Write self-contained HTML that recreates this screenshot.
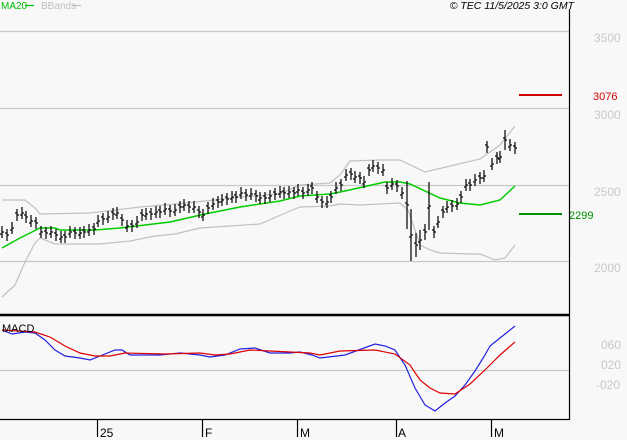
<!DOCTYPE html>
<html><head><meta charset="utf-8"><style>
html,body{margin:0;padding:0;background:#f8f8f8;}
body{width:627px;height:440px;overflow:hidden;position:relative;font-family:"Liberation Sans",sans-serif;}
svg{position:absolute;left:0;top:0;}
</style></head><body>
<svg width="627" height="440" viewBox="0 0 627 440" xmlns="http://www.w3.org/2000/svg" font-family="Liberation Sans, sans-serif">
<rect width="627" height="440" fill="#f8f8f8"/>
<g stroke="#c8c8c8" stroke-width="1.2">
<line x1="0" y1="31.5" x2="569" y2="31.5"/>
<line x1="0" y1="108.5" x2="569" y2="108.5"/>
<line x1="0" y1="185.5" x2="569" y2="185.5"/>
<line x1="0" y1="261.5" x2="569" y2="261.5"/>
<line x1="0" y1="370.5" x2="569" y2="370.5"/>
</g>
<g fill="#c8c8c8" font-size="12">
<text x="594" y="42">3500</text>
<text x="594" y="119">3000</text>
<text x="594" y="196">2500</text>
<text x="594" y="272">2000</text>
<text x="601" y="349">060</text>
<text x="601" y="369">020</text>
<text x="596" y="389">-020</text>
</g>
<polyline fill="none" stroke="#c0c0c0" stroke-width="1.2" points="2,200 25,200 35,208 40,214 90,213 140,207 175,204 215,200 240,197 280,194 300,185 330,183 340,175 350,161 380,160 400,160 425,172 480,159 500,145 515,126"/>
<polyline fill="none" stroke="#c0c0c0" stroke-width="1.2" points="2,297 15,285 25,262 35,243 40,238 55,244 100,244 130,241 155,236 175,234 200,228 230,226 260,224 290,211 300,207 330,206 340,204 360,205 400,203 408,210 415,230 420,245 430,250 440,253 470,254 480,254 495,260 505,258 515,245"/>
<polyline fill="none" stroke="#00cc00" stroke-width="1.5" points="2,248 20,238 40,228 55,228 60,230 95,230 120,228 170,222 205,214 240,207 280,201 300,196 330,194 345,191 385,182 400,182 410,184 440,198 460,203 480,205 500,200 515,186"/>
<g id="bars" stroke="#000" stroke-width="1.2"></g>
<line x1="519" y1="95" x2="562" y2="95" stroke="#d00000" stroke-width="2"/>
<text x="593" y="100" font-size="11" fill="#d00000">3076</text>
<line x1="519" y1="214" x2="562" y2="214" stroke="#009000" stroke-width="2"/>
<text x="569" y="219" font-size="11" fill="#009000">2299</text>
<polyline fill="none" stroke="#2020e0" stroke-width="1.2" points="2,330 12,334 25,332 35,333 45,340 55,350 65,356 80,358 90,360 100,356 115,350 122,350 130,355 160,355 180,353 200,355 210,357 225,355 240,349 255,348 270,353 290,353 300,352 312,355 320,358 345,355 375,344 385,346 395,350 405,365 415,388 425,405 435,411 445,403 455,396 465,385 475,371 485,355 490,346 500,338 515,326"/>
<polyline fill="none" stroke="#dd0000" stroke-width="1.2" points="2,330 35,332 50,337 65,346 80,353 95,356 110,356 125,353 165,354 200,353 215,355 230,354 250,350 270,351 310,353 320,355 340,351 375,350 395,354 410,365 420,380 430,388 440,393 455,394 470,384 485,370 500,355 515,342"/>
<text x="2" y="332" font-size="11" fill="#000">MACD</text>
<line x1="0" y1="315" x2="569" y2="315" stroke="#000" stroke-width="2.5"/>
<line x1="569.5" y1="9" x2="569.5" y2="420" stroke="#000" stroke-width="1.2"/>
<line x1="0" y1="419.5" x2="569" y2="419.5" stroke="#000" stroke-width="1.2"/>
<g stroke="#000" stroke-width="1.2">
<line x1="97.5" y1="419" x2="97.5" y2="437"/>
<line x1="202.5" y1="419" x2="202.5" y2="437"/>
<line x1="297.5" y1="419" x2="297.5" y2="437"/>
<line x1="396.5" y1="419" x2="396.5" y2="437"/>
<line x1="491.5" y1="419" x2="491.5" y2="437"/>
</g>
<g font-size="12" fill="#000">
<text x="100" y="437">25</text>
<text x="205" y="437">F</text>
<text x="300" y="437">M</text>
<text x="398" y="437">A</text>
<text x="494" y="437">M</text>
</g>
<text x="1" y="9" font-size="10" fill="#00bb00">MA20</text>
<line x1="25" y1="5.5" x2="34" y2="5.5" stroke="#00bb00" stroke-width="1.2"/>
<text x="41" y="9" font-size="10" fill="#c0c0c0">BBands</text>
<line x1="72" y1="5.5" x2="81" y2="5.5" stroke="#c0c0c0" stroke-width="1.2"/>
<text x="574" y="9" font-size="10.5" font-style="italic" fill="#000" text-anchor="end">© TEC 11/5/2025 3:0 GMT</text>
</svg>
<script>
var d=[[2,232],[7,235],[12,228],[17,215],[22,213],[26,217],[31,221],[36,223],[41,232],[46,233],[51,232],[56,235],[61,237],[65,237],[70,232],[75,233],[80,233],[84,232],[89,230],[94,229],[98,221],[103,219],[108,217],[113,214],[117,213],[122,220],[127,226],[132,226],[137,222],[142,215],[146,214],[151,214],[156,212],[160,212],[165,209],[170,211],[175,210],[180,207],[184,205],[189,207],[194,207],[199,212],[203,215],[208,208],[213,204],[218,202],[222,200],[227,199],[232,197],[236,197],[241,193],[246,195],[251,194],[256,196],[260,198],[265,198],[270,196],[275,194],[280,192],[284,193],[289,192],[294,193],[298,190],[303,193],[308,190],[312,188],[317,197],[322,202],[327,202],[331,197],[336,188],[341,185],[346,175],[351,174],[355,177],[360,178],[364,182],[369,170],[373,166],[378,168],[383,170],[387,188],[392,184],[397,186],[402,193],[407,205,24],[411,235,26],[416,245,12],[420,240,10],[425,232,8],[429,206,24],[434,232,6],[438,222],[443,212],[447,207],[452,206],[457,204],[461,197],[466,185],[470,185],[475,180],[480,178],[484,176],[487,147],[492,164],[497,158],[500,157],[505,140,10],[510,145],[515,148]];
var g=document.getElementById('bars'),s='';
d.forEach(function(b,i){var h=b[2]||6;var o=(i%2)?-2:2;
s+='<line x1="'+b[0]+'" y1="'+(b[1]-h)+'" x2="'+b[0]+'" y2="'+(b[1]+h)+'"/>';
s+='<line x1="'+(b[0]-2)+'" y1="'+(b[1]+o)+'" x2="'+b[0]+'" y2="'+(b[1]+o)+'"/>';
s+='<line x1="'+b[0]+'" y1="'+b[1]+'" x2="'+(b[0]+2)+'" y2="'+b[1]+'"/>';});
g.innerHTML=s;
</script>
</body></html>
